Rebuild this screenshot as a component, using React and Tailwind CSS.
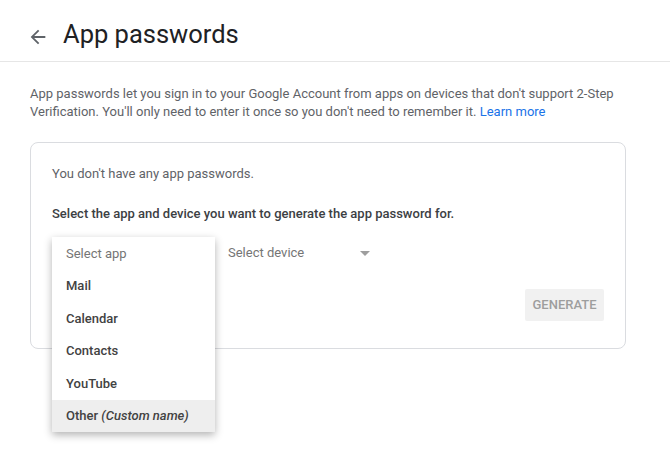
import React from 'react';

const apps = ['Mail', 'Calendar', 'Contacts', 'YouTube'];

export default function App() {
  return (
    <div className="w-[670px] h-[466px] bg-white overflow-hidden font-['Roboto',sans-serif]">
      <header className="h-[62px] border-b border-[#e6e6e6] flex items-center">
        <svg viewBox="0 0 24 24" className="w-[22px] h-[22px] ml-[27px] mt-[12px] fill-[#5f6368]">
          <path d="M20 11H7.83l5.59-5.59L12 4l-8 8 8 8 1.41-1.41L7.83 13H20v-2z" />
        </svg>
        <h1 className="ml-[14px] text-[25.5px] leading-none text-[#202124] mt-[9px]">
          App passwords
        </h1>
      </header>

      <p className="mx-[30px] mt-[23px] text-[13px] leading-[18px] text-[#5f6368]">
        App passwords let you sign in to your Google Account from apps on devices that don't support 2-Step
        <br />
        Verification. You'll only need to enter it once so you don't need to remember it.{' '}
        <a className="text-[#1a73e8]">Learn more</a>
      </p>

      <div className="ml-[30px] mt-[21px] w-[596px] h-[207px] border border-[#dadce0] rounded-[8px] px-[21px] pt-[23px] flex flex-col">
        <p className="text-[13px] leading-[16px] text-[#5f6368]">You don't have any app passwords.</p>
        <p className="mt-[24px] text-[13px] leading-[16px] font-medium text-[#3c4043]">
          Select the app and device you want to generate the app password for.
        </p>

        <div className="mt-[15px] flex items-center gap-[13px]">
          <div className="relative w-[163px] h-[32px]">
            <div className="absolute left-0 top-0 w-[163px] bg-white shadow-[0_3px_8px_rgba(0,0,0,0.3)] z-10">
              <div className="h-[32.5px] flex items-center px-[14px] text-[13px] text-[#757575]">Select app</div>
              {apps.map((a) => (
                <div key={a} className="h-[32.5px] flex items-center px-[14px] text-[13px] font-medium text-[#424242]">
                  {a}
                </div>
              ))}
              <div className="h-[32.5px] flex items-center px-[14px] text-[13px] font-medium text-[#424242] bg-[#eeeeee]">
                Other&nbsp;<span className="italic">(Custom name)</span>
              </div>
            </div>
          </div>
          <div className="w-[147px] h-[32px] flex items-center justify-between">
            <span className="text-[13px] text-[#757575]">Select device</span>
            <span className="w-0 h-0 border-l-[5px] border-r-[5px] border-t-[5px] border-l-transparent border-r-transparent border-t-[#9e9e9e] mr-[5px]" />
          </div>
        </div>

        <div className="mt-[20px] flex justify-end">
          <button className="w-[79px] h-[32px] bg-[#f1f1f1] rounded-[2px] text-[13px] font-medium text-[#9e9e9e] uppercase">
            Generate
          </button>
        </div>
      </div>
    </div>
  );
}
